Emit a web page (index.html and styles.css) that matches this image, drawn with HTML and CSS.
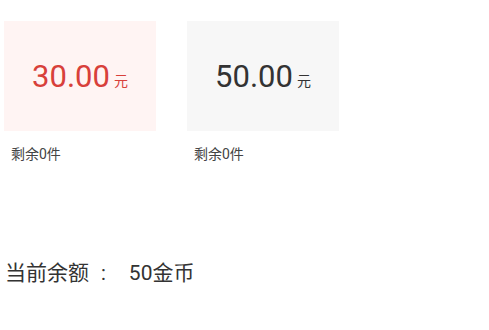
FILE: index.html
```html
<!DOCTYPE html>
<html lang="zh-CN">
<head>
<meta charset="utf-8">
<title>充值</title>
<link rel="stylesheet" href="styles.css">
</head>
<body>
<div class="page">
  <div class="cards">
    <div class="item">
      <div class="card card-active">
        <span class="amount">30.00</span><span class="unit">元</span>
      </div>
      <div class="remain">剩余0件</div>
    </div>
    <div class="item">
      <div class="card">
        <span class="amount">50.00</span><span class="unit">元</span>
      </div>
      <div class="remain">剩余0件</div>
    </div>
  </div>
  <div class="balance">
    <span class="label">当前余额</span><span class="colon">:</span><span class="value">50金币</span>
  </div>
</div>
</body>
</html>
```

FILE: styles.css
```css
html, body {
  margin: 0;
  padding: 0;
  background: #ffffff;
}
body {
  font-family: Roboto, "Noto Sans CJK SC", sans-serif;
  color: #333333;
}
.page {
  padding: 21px 0 0 4px;
}
.cards {
  display: flex;
  gap: 31px;
}
.item {
  width: 152px;
}
.card {
  height: 110px;
  background: #f7f7f7;
  display: flex;
  align-items: center;
  justify-content: center;
  color: #333333;
}
.card-active {
  background: #fff4f3;
  color: #d8403a;
}
.amount {
  font-size: 31px;
  line-height: 1;
}
.unit {
  font-size: 14px;
  margin-left: 4px;
  margin-top: 8px;
}
.remain {
  font-size: 14px;
  line-height: 20px;
  margin-top: 13px;
  padding-left: 7px;
  color: #444444;
}
.balance {
  margin-top: 95px;
  padding-left: 1px;
  font-size: 21px;
  line-height: 28px;
  color: #333333;
  display: flex;
  align-items: center;
}
.colon {
  font-size: 20px;
  margin-left: 12px;
}
.value {
  margin-left: 23px;
}
```
